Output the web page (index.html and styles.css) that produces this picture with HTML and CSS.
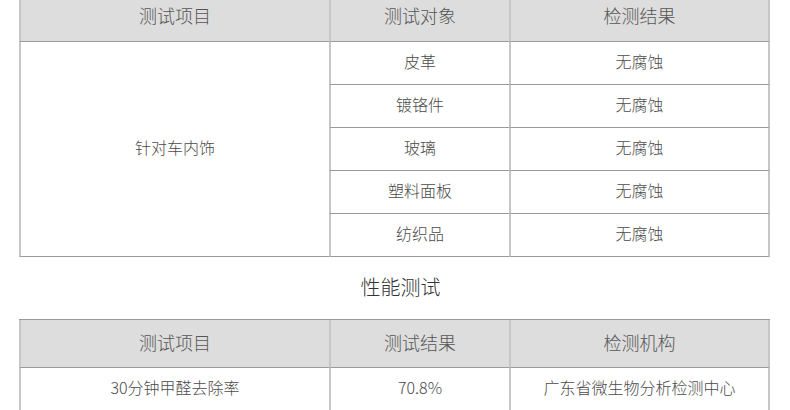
FILE: index.html
```html
<!DOCTYPE html>
<html lang="zh">
<head>
<meta charset="utf-8">
<link rel="stylesheet" href="styles.css">
</head>
<body>
<div class="page">
  <div class="grid first">
    <div class="cell head c1">测试项目</div>
    <div class="cell head">测试对象</div>
    <div class="cell head last">检测结果</div>
    <div class="cell span5 c1">针对车内饰</div>
    <div class="cell">皮革</div>
    <div class="cell last">无腐蚀</div>
    <div class="cell">镀铬件</div>
    <div class="cell last">无腐蚀</div>
    <div class="cell">玻璃</div>
    <div class="cell last">无腐蚀</div>
    <div class="cell">塑料面板</div>
    <div class="cell last">无腐蚀</div>
    <div class="cell">纺织品</div>
    <div class="cell last">无腐蚀</div>
  </div>
  <div class="title">性能测试</div>
  <div class="grid second">
    <div class="cell head c1">测试项目</div>
    <div class="cell head">测试结果</div>
    <div class="cell head last">检测机构</div>
    <div class="cell c1">30分钟甲醛去除率</div>
    <div class="cell">70.8%</div>
    <div class="cell last">广东省微生物分析检测中心</div>
  </div>
</div>
</body>
</html>
```

FILE: styles.css
```css
html, body {
  margin: 0;
  padding: 0;
  background: #ffffff;
}
body {
  font-family: "Noto Sans CJK SC", "Noto Sans", sans-serif;
  color: #555555;
}
.page {
  margin-top: -7px;
  margin-left: 19px;
  width: 751px;
}
.grid {
  display: grid;
  grid-template-columns: 310px 180px 261px;
}
.grid.first {
  grid-template-rows: 49px repeat(5, 43px);
}
.grid.second {
  grid-template-rows: 48px 43px;
  border-top: 1px solid #9a9a9a;
}
.cell {
  box-sizing: border-box;
  display: flex;
  align-items: center;
  justify-content: center;
  padding-bottom: 4px;
  border-left: 2px solid #c6c6c6;
  border-bottom: 1px solid #9a9a9a;
  font-size: 16px;
  font-weight: 300;
  color: #4a4a4a;
  background: #ffffff;
}
.cell.last {
  border-right: 2px solid #c6c6c6;
}
.cell.head {
  background: #dddddd;
  font-size: 18px;
  color: #555555;
}
.span5 {
  grid-row: span 5;
}
.title {
  box-sizing: border-box;
  height: 62px;
  display: flex;
  align-items: center;
  justify-content: center;
  font-size: 20px;
  font-weight: 300;
  color: #333333;
  padding-left: 12px;
  padding-bottom: 4px;
}
```
